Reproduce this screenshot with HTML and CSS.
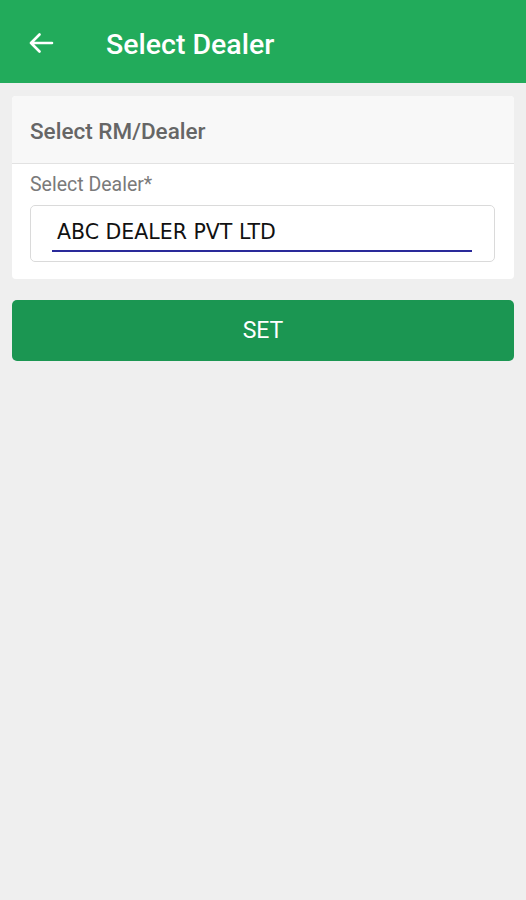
FILE: index.html
```html
<!DOCTYPE html>
<html>
<head>
<meta charset="utf-8">
<link rel="stylesheet" href="styles.css">
</head>
<body>
<header class="appbar">
  <span class="back">
    <svg width="26" height="20" viewBox="0 0 26 20"><path d="M24 10H3M11.5 1.5L3 10l8.5 8.5" fill="none" stroke="#fff" stroke-width="2.6" stroke-linecap="round" stroke-linejoin="round"/></svg>
  </span>
  <h1 class="title">Select Dealer</h1>
</header>
<main class="content">
  <section class="card">
    <div class="card-head">Select RM/Dealer</div>
    <div class="card-body">
      <label class="label">Select Dealer*</label>
      <div class="field">
        <div class="value">ABC DEALER PVT LTD</div>
      </div>
    </div>
  </section>
  <button class="set">SET</button>
</main>
</body>
</html>
```
FILE: styles.css
```css
html, body {
  margin: 0;
  padding: 0;
  background: #efefef;
  font-family: Roboto, "Liberation Sans", sans-serif;
  width: 526px;
  height: 900px;
  overflow: hidden;
}
.appbar {
  height: 83px;
  background: #22ab5b;
  display: flex;
  align-items: center;
  padding-left: 28px;
  box-sizing: border-box;
}
.back {
  display: flex;
  width: 26px;
  height: 20px;
  margin-top: 2px;
}
.title {
  margin: 6px 0 0 52px;
  color: #fff;
  font-size: 28.5px;
  font-weight: 500;
}
.content {
  padding: 13px 12px 0 12px;
  display: flex;
  flex-direction: column;
  gap: 21px;
}
.card {
  background: #fff;
  border-radius: 4px;
  overflow: hidden;
}
.card-head {
  height: 68px;
  background: #f8f8f8;
  border-bottom: 1px solid #e2e2e2;
  display: flex;
  align-items: center;
  padding-left: 18px;
  padding-top: 2px;
  box-sizing: border-box;
  font-size: 22.5px;
  font-weight: 500;
  color: #666;
}
.card-body {
  padding: 10px 18px 17px 18px;
}
.label {
  display: block;
  font-size: 19.5px;
  color: #7a7a7a;
  line-height: 22px;
}
.field {
  margin-top: 9px;
  width: 465px;
  height: 57px;
  box-sizing: border-box;
  border: 1px solid #dadada;
  border-radius: 5px;
  padding: 13px 22px 0 21px;
}
.value {
  font-family: "DejaVu Sans", sans-serif;
  font-size: 20.5px;
  color: #111;
  border-bottom: 2px solid #2a2a9a;
  height: 33px;
  line-height: 26px;
  padding-left: 5px;
  box-sizing: border-box;
}
.set {
  height: 61px;
  background: #1b9652;
  color: #fff;
  border: none;
  border-radius: 5px;
  font-family: Roboto, "Liberation Sans", sans-serif;
  font-size: 23px;
  padding: 0;
}
```
